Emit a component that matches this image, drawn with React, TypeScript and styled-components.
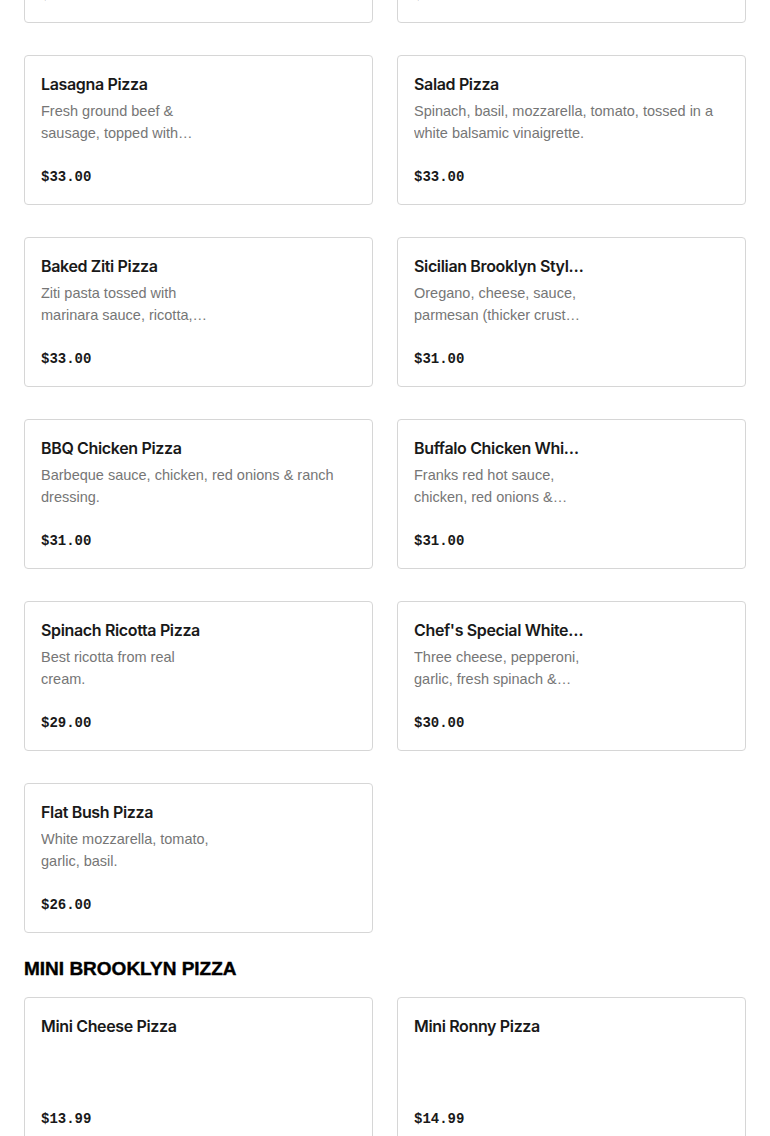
import React from "react";
import styled, { createGlobalStyle } from "styled-components";

const GlobalStyle = createGlobalStyle`
  html, body {
    margin: 0;
    padding: 0;
    background: #ffffff;
    overflow: hidden;
  }
  body {
    font-family: "Liberation Sans", Arial, sans-serif;
    color: #191919;
  }
`;

const Page = styled.div`
  padding: 0 24px;
  width: 722px;
`;

const Grid = styled.div<{ $offset?: number }>`
  display: grid;
  grid-template-columns: 349px 349px;
  column-gap: 24px;
  row-gap: 32px;
  margin-top: ${p => p.$offset ?? 0}px;
`;

const SectionTitle = styled.h2`
  margin: 24px 0 16px;
  font-family: "Liberation Sans", Arial, sans-serif;
  font-weight: 900;
  font-size: 19px;
  line-height: 24px;
  color: #000000;
  -webkit-text-stroke: 0.4px #000;
  text-transform: uppercase;
`;

const Card = styled.div`
  box-sizing: border-box;
  height: 150px;
  border: 1px solid #d6d6d6;
  border-radius: 4px;
  padding: 16px;
  display: flex;
  flex-direction: column;
  background: #fff;
`;

const Name = styled.div<{ $narrow?: boolean }>`
  font-family: Inter, "Liberation Sans", sans-serif;
  font-weight: 600;
  font-size: 16px;
  letter-spacing: -0.35px;
  line-height: 24px;
  color: #191919;
  white-space: nowrap;
  overflow: hidden;
  text-overflow: ellipsis;
  max-width: ${p => (p.$narrow ? "170px" : "100%")};
`;

const Description = styled.div<{ $narrow?: boolean }>`
  margin-top: 4px;
  font-family: "Liberation Sans", Arial, sans-serif;
  font-size: 14.5px;
  line-height: 22px;
  color: #767676;
  max-width: ${p => (p.$narrow ? "176px" : "100%")};
  display: -webkit-box;
  -webkit-line-clamp: 2;
  -webkit-box-orient: vertical;
  overflow: hidden;
`;

const Price = styled.div`
  margin-top: auto;
  font-family: "Liberation Mono", "DejaVu Sans Mono", monospace;
  font-weight: 700;
  font-size: 14px;
  line-height: 22px;
  color: #191919;
`;

type Item = { name: string; desc?: string; price: string; narrow?: boolean };

const pizzas: Item[] = [
  { name: "Margherita Pizza", desc: "Fresh mozzarella, tomato sauce, basil.", price: "$28.00", narrow: true },
  { name: "Grandma Pizza", desc: "Thin square crust, mozzarella, plum tomato sauce.", price: "$28.00", narrow: true },
  { name: "Lasagna Pizza", desc: "Fresh ground beef & sausage, topped with ricotta and mozzarella.", price: "$33.00", narrow: true },
  { name: "Salad Pizza", desc: "Spinach, basil, mozzarella, tomato, tossed in a white balsamic vinaigrette.", price: "$33.00" },
  { name: "Baked Ziti Pizza", desc: "Ziti pasta tossed with marinara sauce, ricotta, mozzarella.", price: "$33.00", narrow: true },
  { name: "Sicilian Brooklyn Style Pizza", desc: "Oregano, cheese, sauce, parmesan (thicker crust square pie).", price: "$31.00", narrow: true },
  { name: "BBQ Chicken Pizza", desc: "Barbeque sauce, chicken, red onions & ranch dressing.", price: "$31.00" },
  { name: "Buffalo Chicken White Pizza", desc: "Franks red hot sauce, chicken, red onions & ranch dressing.", price: "$31.00", narrow: true },
  { name: "Spinach Ricotta Pizza", desc: "Best ricotta from real cream.", price: "$29.00", narrow: true },
  { name: "Chef's Special White Pizza", desc: "Three cheese, pepperoni, garlic, fresh spinach & basil.", price: "$30.00", narrow: true },
  { name: "Flat Bush Pizza", desc: "White mozzarella, tomato, garlic, basil.", price: "$26.00", narrow: true },
];

const minis: Item[] = [
  { name: "Mini Cheese Pizza", price: "$13.99" },
  { name: "Mini Ronny Pizza", price: "$14.99" },
];

const MenuCard: React.FC<{ item: Item }> = ({ item }) => (
  <Card>
    <Name $narrow={item.narrow}>{item.name}</Name>
    {item.desc && <Description $narrow={item.narrow}>{item.desc}</Description>}
    <Price>{item.price}</Price>
  </Card>
);

export default function App() {
  return (
    <>
      <GlobalStyle />
      <Page>
        <Grid $offset={-127}>
          {pizzas.map(p => <MenuCard key={p.name} item={p} />)}
        </Grid>
        <SectionTitle>Mini Brooklyn Pizza</SectionTitle>
        <Grid>
          {minis.map(p => <MenuCard key={p.name} item={p} />)}
        </Grid>
      </Page>
    </>
  );
}
